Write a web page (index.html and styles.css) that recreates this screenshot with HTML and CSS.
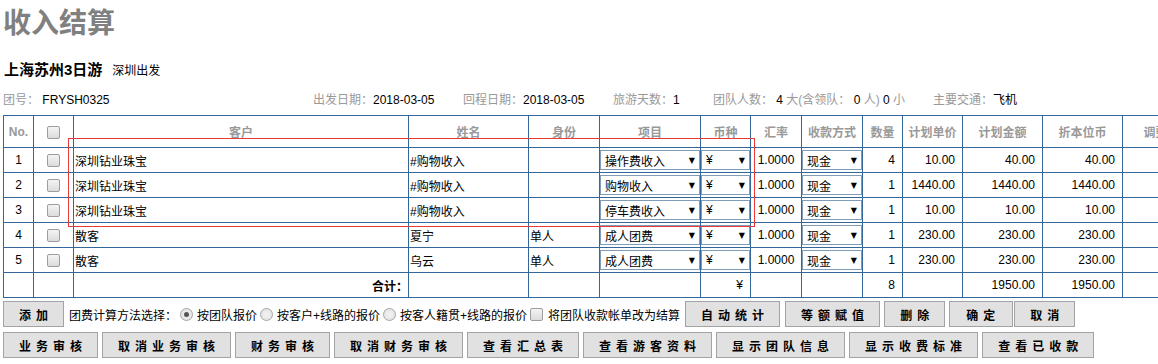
FILE: index.html
```html
<!DOCTYPE html>
<html lang="zh-CN">
<head>
<meta charset="utf-8">
<title>收入结算</title>
<link rel="stylesheet" href="styles.css">
</head>
<body>
<div class="page">
  <h1 class="title">收入结算</h1>
  <div class="tour"><span class="tour-name">上海苏州3日游</span><span class="tour-from">深圳出发</span></div>
  <div class="info">
    <div><span class="lbl">团号：</span> FRYSH0325</div>
    <div><span class="lbl">出发日期：</span>2018-03-05</div>
    <div><span class="lbl">回程日期：</span>2018-03-05</div>
    <div><span class="lbl">旅游天数：</span>1</div>
    <div><span class="lbl">团队人数：</span> 4 <span class="lbl">大(含领队：</span> 0 <span class="lbl">人)</span> 0 <span class="lbl">小</span></div>
    <div><span class="lbl">主要交通：</span>飞机</div>
  </div>

  <div class="grid-wrap">
    <table class="grid">
      <colgroup>
        <col class="c-no"><col class="c-cb"><col class="c-cust"><col class="c-name"><col class="c-id">
        <col class="c-item"><col class="c-cur"><col class="c-rate"><col class="c-pay"><col class="c-qty">
        <col class="c-price"><col class="c-amt"><col class="c-base"><col class="c-adj">
      </colgroup>
      <thead>
        <tr>
          <th>No.</th><th><span class="cb"></span></th><th>客户</th><th>姓名</th><th>身份</th>
          <th>项目</th><th>币种</th><th>汇率</th><th>收款方式</th><th>数量</th>
          <th>计划单价</th><th>计划金额</th><th>折本位币</th><th>调整金额</th>
        </tr>
      </thead>
      <tbody>
        <tr>
          <td class="ctr">1</td><td class="ctr"><span class="cb"></span></td><td>深圳钻业珠宝</td><td>#购物收入</td><td></td>
          <td class="fill"><div class="sel">操作费收入</div></td><td class="fill"><div class="sel">¥</div></td>
          <td class="ctr">1.0000</td><td class="fill"><div class="sel">现金</div></td>
          <td class="num">4</td><td class="num">10.00</td><td class="num">40.00</td><td class="num">40.00</td><td></td>
        </tr>
        <tr>
          <td class="ctr">2</td><td class="ctr"><span class="cb"></span></td><td>深圳钻业珠宝</td><td>#购物收入</td><td></td>
          <td class="fill"><div class="sel">购物收入</div></td><td class="fill"><div class="sel">¥</div></td>
          <td class="ctr">1.0000</td><td class="fill"><div class="sel">现金</div></td>
          <td class="num">1</td><td class="num">1440.00</td><td class="num">1440.00</td><td class="num">1440.00</td><td></td>
        </tr>
        <tr>
          <td class="ctr">3</td><td class="ctr"><span class="cb"></span></td><td>深圳钻业珠宝</td><td>#购物收入</td><td></td>
          <td class="fill"><div class="sel">停车费收入</div></td><td class="fill"><div class="sel">¥</div></td>
          <td class="ctr">1.0000</td><td class="fill"><div class="sel">现金</div></td>
          <td class="num">1</td><td class="num">10.00</td><td class="num">10.00</td><td class="num">10.00</td><td></td>
        </tr>
        <tr>
          <td class="ctr">4</td><td class="ctr"><span class="cb"></span></td><td>散客</td><td>夏宁</td><td>单人</td>
          <td class="fill"><div class="sel">成人团费</div></td><td class="fill"><div class="sel">¥</div></td>
          <td class="ctr">1.0000</td><td class="fill"><div class="sel">现金</div></td>
          <td class="num">1</td><td class="num">230.00</td><td class="num">230.00</td><td class="num">230.00</td><td></td>
        </tr>
        <tr>
          <td class="ctr">5</td><td class="ctr"><span class="cb"></span></td><td>散客</td><td>乌云</td><td>单人</td>
          <td class="fill"><div class="sel">成人团费</div></td><td class="fill"><div class="sel">¥</div></td>
          <td class="ctr">1.0000</td><td class="fill"><div class="sel">现金</div></td>
          <td class="num">1</td><td class="num">230.00</td><td class="num">230.00</td><td class="num">230.00</td><td></td>
        </tr>
        <tr class="total">
          <td></td><td></td><td class="num strong">合计：</td><td></td><td></td><td></td>
          <td class="num">¥</td><td></td><td></td><td class="num">8</td><td></td>
          <td class="num">1950.00</td><td class="num">1950.00</td><td></td>
        </tr>
      </tbody>
    </table>
    <div class="mark"></div>
  </div>

  <div class="actions row1">
    <button class="btn">添加</button>
    <span class="opt-label">团费计算方法选择：</span>
    <span class="radio on"></span><span class="opt">按团队报价</span>
    <span class="radio"></span><span class="opt">按客户+线路的报价</span>
    <span class="radio"></span><span class="opt">按客人籍贯+线路的报价</span>
    <span class="cb small"></span><span class="opt wide">将团队收款帐单改为结算</span>
    <button class="btn b-auto">自动统计</button>
    <button class="btn b-wide">等额赋值</button>
    <button class="btn b-next">删除</button>
    <button class="btn b-next b-ok">确定</button>
    <button class="btn b-touch">取消</button>
  </div>
  <div class="actions row2">
    <button class="btn">业务审核</button>
    <button class="btn">取消业务审核</button>
    <button class="btn">财务审核</button>
    <button class="btn">取消财务审核</button>
    <button class="btn">查看汇总表</button>
    <button class="btn">查看游客资料</button>
    <button class="btn">显示团队信息</button>
    <button class="btn">显示收费标准</button>
    <button class="btn">查看已收款</button>
  </div>
</div>
</body>
</html>
```

FILE: styles.css
```css
html, body {
  margin: 0;
  padding: 0;
  background: #fff;
  overflow: hidden;
}
body {
  font-family: "Liberation Sans", "Noto Sans CJK SC", sans-serif;
  font-size: 12px;
  color: #000;
}
.page {
  padding: 0 3px;
  width: 1220px;
}
.title {
  margin: 0;
  padding-top: 8px;
  font-size: 28px;
  line-height: 32px;
  font-weight: bold;
  color: #808080;
}
.tour {
  margin-top: 20px;
  height: 20px;
  line-height: 20px;
  display: flex;
  align-items: baseline;
  padding-left: 1px;
}
.tour-name {
  font-size: 15px;
  font-weight: bold;
}
.tour-from {
  margin-left: 10px;
  font-size: 12px;
}
.info {
  margin-top: 10px;
  height: 20px;
  line-height: 20px;
  display: grid;
  grid-template-columns: 310px 150px 150px 100px 220px auto;
  margin-bottom: 5px;
}
.lbl {
  color: #999;
}

.grid-wrap {
  position: relative;
}
.grid {
  border-collapse: collapse;
  table-layout: fixed;
  width: 1210px;
}
.c-no { width: 30px; }
.c-cb { width: 40px; }
.c-cust { width: 335px; }
.c-name { width: 120px; }
.c-id { width: 71px; }
.c-item { width: 101px; }
.c-cur { width: 50px; }
.c-rate { width: 51px; }
.c-pay { width: 61px; }
.c-qty { width: 40px; }
.c-price { width: 60px; }
.c-amt { width: 80px; }
.c-base { width: 80px; }
.c-adj { width: 90px; }

.grid th, .grid td {
  border: 1px solid #336699;
  padding: 0 1px;
  white-space: nowrap;
  overflow: hidden;
}
.grid th {
  height: 31px;
  color: #999;
  font-weight: bold;
  text-align: center;
}
.grid td {
  height: 24px;
  text-align: left;
}
.grid td.ctr { text-align: center; }
.grid td.num { text-align: right; padding-right: 7px; }
.grid td.strong { font-weight: bold; padding-right: 0; }
.grid td.fill { padding: 0; }

.sel {
  box-sizing: border-box;
  height: 20px;
  border: 1px solid #7f9db9;
  background: #fff;
  display: flex;
  align-items: center;
  justify-content: space-between;
  padding: 0 4px 0 4px;
}
.sel::after {
  content: "▼";
  font-family: "DejaVu Sans", sans-serif;
  font-size: 8px;
}

.cb {
  display: inline-block;
  box-sizing: border-box;
  width: 13px;
  height: 13px;
  border: 1px solid #9d9d9d;
  border-radius: 2px;
  background: linear-gradient(#f4f4f4, #dcdcdc);
  vertical-align: middle;
}

.mark {
  position: absolute;
  left: 65px;
  top: 23px;
  width: 687px;
  height: 89px;
  box-sizing: border-box;
  border: 1px solid #e83a3a;
  pointer-events: none;
}

.actions {
  display: flex;
  align-items: center;
}
.row1 { margin-top: 3px; }
.row2 { margin-top: 5px; gap: 4px; }

.btn {
  box-sizing: border-box;
  height: 26px;
  margin: 0;
  padding: 0 10px 0 15px;
  border: 1px solid #a3a3a3;
  background: #e1e1e1;
  font-family: "Liberation Sans", "Noto Sans CJK SC", sans-serif;
  font-size: 12px;
  font-weight: bold;
  letter-spacing: 5px;
  color: #000;
  white-space: nowrap;
}
.btn.b-auto { margin-left: 5px; }
.btn.b-wide { margin-left: 5px; }
.btn.b-next { margin-left: 4px; }
.btn.b-ok { padding: 0 12px 0 16px; }
.btn.b-touch { margin-left: 1px; }

.opt-label { margin-left: 5px; }
.radio {
  display: inline-block;
  box-sizing: border-box;
  width: 13px;
  height: 13px;
  margin-left: 3px;
  border: 1px solid #a5a5a5;
  border-radius: 50%;
  background: radial-gradient(circle, #f4f4f4 0, #dedede 100%);
  position: relative;
}
.radio.on::after {
  content: "";
  position: absolute;
  left: 3px;
  top: 3px;
  width: 5px;
  height: 5px;
  border-radius: 50%;
  background: #555;
}
.opt { margin-left: 4px; }
.cb.small { margin-left: 3px; }
.opt.wide { margin-left: 5px; }
```
